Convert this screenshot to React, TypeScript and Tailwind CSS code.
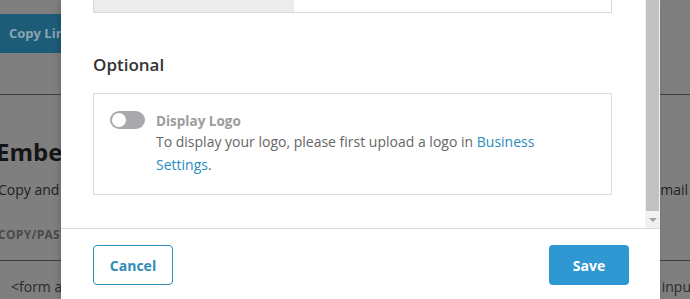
import React from 'react';

const font = { fontFamily: '"Open Sans", Lato, sans-serif' };

const Toggle = () => (
  <div className="relative w-[35px] h-[18px] rounded-full bg-[#a8aaad] shrink-0">
    <div className="absolute left-[2px] top-[2px] w-[14px] h-[14px] rounded-full bg-white" />
  </div>
);

const Scrollbar = () => (
  <div className="w-[15px] h-full bg-[#f1f1f1] flex flex-col items-center px-[1px]">
    <div className="w-[13px] flex-1 bg-[#c1c1c1]" />
    <div className="h-[17px] flex items-center justify-center">
      <div className="w-0 h-0 border-l-[4px] border-r-[4px] border-t-[4px] border-l-transparent border-r-transparent border-t-[#a3a3a3]" />
    </div>
  </div>
);

export default function App() {
  return (
    <div className="relative w-[690px] h-[299px] overflow-hidden bg-[#7f7f7f]" style={font}>
      {/* Page behind the overlay */}
      <div className="flex flex-col">
        <div className="h-[14px]" />
        <div className="w-[90px] h-[39px] bg-[#1d5c77] flex items-center pl-[9px] text-[13px] font-bold text-[#8aa4b3]">
          Copy Link
        </div>
        <div className="h-[41px]" />
        <div className="border-t border-[#3d3d3d]" />
        <div className="pt-[42px] -ml-[4px] text-[24px] font-bold text-[#151515] leading-[30px]">Embed</div>
        <div className="pt-[13px] -ml-[2px] text-[14px] leading-[20px] text-[#1e1e1e] flex justify-between">
          <span>Copy and paste</span>
          <span className="mr-[2px]">email</span>
        </div>
        <div className="pt-[27px] -ml-[2px] text-[12px] leading-[16px] font-bold text-[#4a4a4a] tracking-wide">COPY/PASTE</div>
        <div className="mt-[17px] border-t border-[#3d3d3d]" />
        <div className="pt-[16px] pl-[11px] text-[14px] leading-[20px] text-[#2b2b2b] flex justify-between">
          <span>&lt;form action</span>
          <span className="mr-[-6px]">input</span>
        </div>
      </div>

      {/* Modal */}
      <div className="absolute left-[61px] top-0 w-[599px] h-[299px] bg-white flex flex-col shadow-[-2px_0_6px_rgba(0,0,0,0.15)]">
        <div className="h-[228px] flex">
          <div className="flex-1 pl-[32px] pr-[33px]">
            <div className="h-[14px] -mt-[1px] border border-[#d9d9d9] border-t-0 flex">
              <div className="w-[200px] bg-[#ececed]" />
            </div>
            <div className="pt-[41px] text-[17px] font-semibold text-[#333] leading-[22px]">Optional</div>
            <div className="mt-[17px] h-[102px] border border-[#dcdcdc] pl-[16px] pt-[17px] flex gap-[11px]">
              <Toggle />
              <div className="flex flex-col">
                <div className="text-[13.5px] font-bold text-[#9c9c9c] leading-[18px] mt-[1px]">Display Logo</div>
                <div className="text-[14px] text-[#666] leading-[23px] w-[400px]">
                  To display your logo, please first upload a logo in{' '}
                  <span className="text-[#2a8cbd]">Business Settings</span>.
                </div>
              </div>
            </div>
          </div>
          <Scrollbar />
        </div>
        <div className="border-t border-[#d8d8d8] flex justify-between pl-[32px] pr-[31px] pt-[16px]">
          <button className="w-[80px] h-[40px] rounded-[4px] border border-[#2f8db6] text-[#2f8db6] text-[14px] font-bold">
            Cancel
          </button>
          <button className="w-[80px] h-[40px] rounded-[4px] bg-[#2f97d1] text-white text-[14px] font-bold">
            Save
          </button>
        </div>
      </div>
    </div>
  );
}
